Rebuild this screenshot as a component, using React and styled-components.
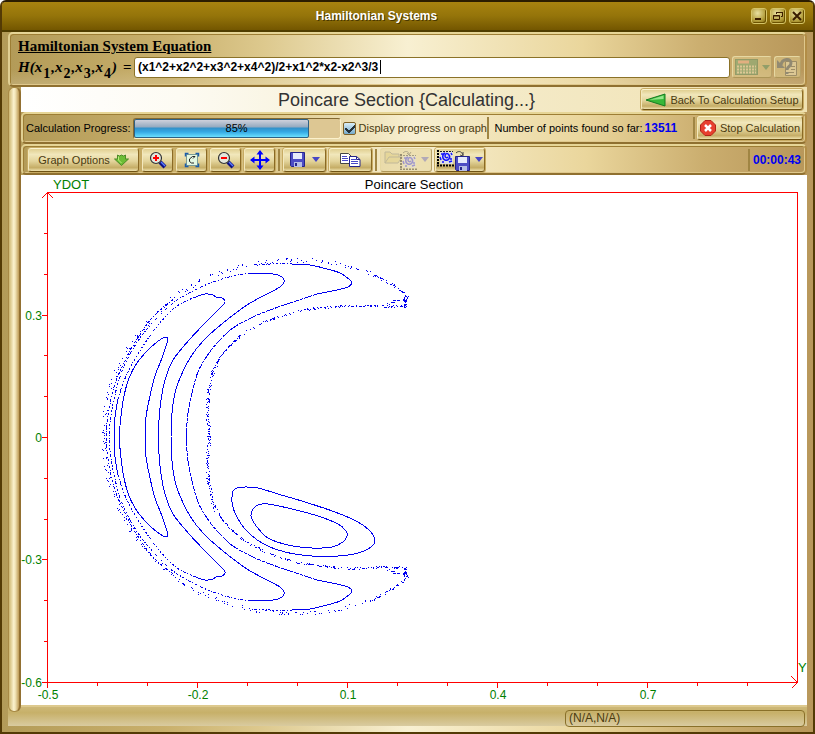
import React from "react";
import styled, { createGlobalStyle, css } from "styled-components";

const sheen =
  "linear-gradient(90deg, #b39b58 0%, #c9b06c 20%, #ddc98e 32%, #f8f0d2 50%, #ead69c 72%, #cbae6f 87%, #b8975a 100%)";

const Global = createGlobalStyle`
  * { box-sizing: border-box; }
  body { margin: 0; background: #fff; font-family: "Liberation Sans", Arial, sans-serif; font-size: 11px; color: #000; }
  button, input, output { font: inherit; }
`;

const Window = styled.div`
  display: flex;
  flex-direction: column;
  min-height: 100vh;
  border: 2px solid #533a05;
  border-top-color: #2b1d00;
  border-radius: 6px 6px 0 0;
  background: ${sheen};
  overflow: hidden;
`;

const TitleBar = styled.header`
  display: grid;
  grid-template-columns: 1fr auto 1fr;
  align-items: center;
  height: 30px;
  padding: 0 8px;
  background: linear-gradient(#a8830f, #94740a 50%, #735600);
  border-bottom: 2px solid #4f3d00;
`;

const Title = styled.h1`
  grid-column: 2;
  margin: 0;
  padding-right: 62px;
  font-size: 12px;
  line-height: 16px;
  color: #fff;
  text-shadow: 1px 1px 0 #4a3800;
`;

const WindowButtons = styled.div`
  display: flex;
  gap: 3px;
  justify-content: flex-end;
`;

const WindowButton = styled.button`
  display: grid;
  place-items: center;
  width: 16px;
  height: 16px;
  padding: 0;
  border: 1px solid #d5c466;
  border-radius: 3px;
  background: radial-gradient(circle at 40% 30%, #e9e0a0, #b39e3c 60%, #806608);
  box-shadow: inset -1px -1px 0 #6b5200;
`;

const panel = css`
  border: 2px solid;
  border-color: #e6d596 #b28d46 #8f7030 #e0cf92;
  border-radius: 5px;
  box-shadow: inset 1px 1px 0 #9d7e35, inset -1px -1px 0 #dfc88c;
`;

const Body = styled.main`
  flex: 1;
  display: flex;
  flex-direction: column;
  padding: 0 6px 6px;
`;

const EquationPanel = styled.section`
  ${panel}
  height: 55px;
  padding: 3px 4px 4px 8px;
  background: linear-gradient(rgba(255, 255, 255, 0) 70%, rgba(255, 255, 255, 0.15)), ${sheen};
`;

const EquationHeading = styled.h2`
  margin: 0;
  font: bold 15px/18px "Liberation Serif", "Times New Roman", serif;
  text-decoration: underline;
`;

const EquationRow = styled.div`
  display: flex;
  align-items: center;
  gap: 2px;
  height: 24px;
`;

const EquationLabel = styled.label`
  display: flex;
  gap: 1px;
  width: 114px;
  white-space: nowrap;
  font: italic bold 15px/20px "Liberation Serif", "Times New Roman", serif;
  sub { position: relative; top: 7px; font-style: normal; font-size: 14px; vertical-align: baseline; }
  b { font-style: normal; margin-left: 5px; }
`;

const Field = styled.div`
  position: relative;
  flex: 1;
  height: 21px;
`;

const EquationInput = styled.input`
  width: 100%;
  height: 21px;
  padding: 0 3px;
  border: 1px solid #8b7228;
  border-radius: 3px;
  background: #fff;
  font-size: 12px;
  font-weight: bold;
  outline: none;
`;

const Caret = styled.i`
  position: absolute;
  left: 246px;
  top: 3px;
  width: 1px;
  height: 14px;
  background: #000;
`;

const ToolButton = styled.button`
  display: flex;
  align-items: center;
  justify-content: center;
  gap: ${(p) => p.$gap || 4}px;
  flex: none;
  width: ${(p) => p.$w}px;
  height: ${(p) => p.$h || 24}px;
  padding: 0;
  border: 1px solid;
  border-color: #fbf3cf #8a6a25 #6f5314 #f3e8bd;
  border-radius: 3px;
  background: linear-gradient(#e0cf91, #f1e7bb 25%, #e3d49b 55%, #c5ad66 85%, #efe2ae);
  box-shadow: 0 0 0 1px #c7ab63;
  color: #4a3a10;
  white-space: nowrap;
  svg { flex: none; }
  &:disabled {
    border-color: #e6d8a2 #b7a066 #ad9658 #e6d8a2;
    background: rgba(225, 207, 145, 0.5);
    box-shadow: none;
  }
  &:disabled svg { opacity: 0.35; }
`;

const Workspace = styled.div`
  flex: 1;
  display: flex;
`;

const Splitter = styled.div`
  flex: none;
  position: relative;
  z-index: 1;
  width: 13px;
  margin-bottom: 14px;
  border: 1px solid #a88a45;
  border-right: 2px solid #927032;
  border-radius: 6px;
  background: linear-gradient(90deg, #cdb670, #f9efca 45%, #f4e8bd 60%, #bd9a55);
`;

const Content = styled.div`
  flex: 1;
  min-width: 0;
  display: flex;
  flex-direction: column;
`;

const SectionHeader = styled.div`
  display: flex;
  align-items: center;
  height: 25px;
  padding-right: 4px;
  background: linear-gradient(90deg, #fff 0%, #fdfbf3 20%, #f5edcf 50%, #f0e1b0 100%);
`;

const SectionTitle = styled.h2`
  flex: 1;
  margin: 0;
  padding-left: 151px;
  text-align: center;
  font-size: 18px;
  line-height: 22px;
  font-weight: normal;
  color: #333;
  white-space: nowrap;
`;

const Toolbar = styled.div`
  ${panel}
  display: flex;
  align-items: center;
  gap: ${(p) => p.$gap}px;
  height: ${(p) => p.$h}px;
  padding: 0 ${(p) => p.$pr}px 0 ${(p) => p.$pl}px;
  background: ${sheen};
  white-space: nowrap;
`;

const Progress = styled.div`
  position: relative;
  flex: none;
  width: 208px;
  height: 21px;
  border: 1px solid #a3833b;
  border-color: #846a32 #fbf1cc #fbf1cc #846a32;
  border-radius: 3px;
  background: #ddc793;
`;

const ProgressFill = styled.div`
  height: 100%;
  border: 1px solid #2e6184;
  border-radius: 2px;
  background: linear-gradient(#ced1dc, #96abc0 40%, #3291c9 48%, #35a9e4 70%, #6be0ff);
`;

const ProgressText = styled.span`
  position: absolute;
  inset: 0;
  text-align: center;
  line-height: 19px;
`;

const CheckLabel = styled.label`
  display: flex;
  flex: none;
  align-items: center;
  gap: 3px;
  width: 142px;
  color: #4a3a10;
`;

const CheckBox = styled.input`
  appearance: none;
  flex: none;
  width: 13px;
  height: 13px;
  margin: 0;
  border: 1px solid #806226;
  border-radius: 2px;
  background:
    linear-gradient(135deg, transparent 44%, #26333c 44% 62%, transparent 62%) 4px 1px / 8px 9px no-repeat,
    linear-gradient(45deg, transparent 36%, #26333c 36% 66%, transparent 66%) 1px 5px / 5px 5px no-repeat,
    linear-gradient(#d8edf7, #75aacb);
  &:not(:checked) { background: #fff; }
`;

const Separator = styled.span`
  flex: none;
  width: 2px;
  height: 22px;
  background: #a08543;
  margin-left: ${(p) => (p.$auto ? "auto" : "0")};
`;

const Blue = styled.output`
  font-size: 12px;
  font-weight: bold;
  color: #0000f0;
`;

const Count = styled.span`
  display: flex;
  align-items: center;
  gap: 2px;
  padding-left: 4px;
`;

const Graph = styled.figure`
  margin: 0;
  background: #fff;
  svg { display: block; width: 100%; height: auto; }
  text { font-family: "Liberation Sans", Arial, sans-serif; }
`;

const StatusBar = styled.footer`
  display: flex;
  align-items: center;
  height: 21px;
  margin-left: -13px;
  padding: 3px 2px 0 0;
  background: linear-gradient(#cdb878, #c7b069 30%, #d9cba0);
  border-top: 2px solid #ddc98e;
`;

const Coordinates = styled.output`
  width: 240px;
  height: 17px;
  margin-left: auto;
  padding-left: 3px;
  border: 1px solid #897029;
  border-radius: 4px;
  font-size: 12px;
  line-height: 15px;
  color: #4a3a10;
`;

/* ---------- icons ---------- */

const Magnifier = ({ plus }) => (
  <svg width="18" height="18" viewBox="0 0 18 18" aria-hidden="true">
    <path d="M11 11l5 5" stroke="#101080" strokeWidth="4" />
    <path d="M12 11l4 4" stroke="#5a7dff" strokeWidth="1.5" />
    <circle cx="7" cy="7" r="5.5" fill="#e3e6dc" stroke="#333" strokeWidth="1.2" />
    <path d={plus ? "M4 7h6M7 4v6" : "M4 7h6"} stroke="#f00" strokeWidth="2" />
  </svg>
);

const FitIcon = () => (
  <svg width="16" height="16" viewBox="0 0 16 16" fill="none" aria-hidden="true">
    <rect x="2.5" y="2.5" width="11" height="11" fill="#e4f7e2" stroke="#7b9c94" />
    <path d="M1.500 4.500v-3h3M11.500 1.500h3v3M14.500 11.500v3h-3M4.500 14.500h-3v-3" stroke="#1a5caa" strokeWidth="1.5" />
    <path d="M11 4.500H8.500L5.500 7v2.500l2 1.500H10M11 4.500L9 6.500" stroke="#222" />
  </svg>
);

const MoveIcon = () => (
  <svg width="20" height="20" viewBox="0 0 20 20" aria-hidden="true">
    <path d="M10 3v14M3 10h14" stroke="#00f" strokeWidth="2" />
    <path d="M10 0l3.500 4.500h-7zM10 20l3.500-4.500h-7zM0 10l4.500-3.500v7zM20 10l-4.500-3.500v7z" fill="#00f" />
  </svg>
);

const Floppy = () => (
  <>
    <path d="M.5.5h14v14h-13l-1-1z" fill="#4c4cc4" stroke="#24248c" />
    <path d="M3 1h9v6H3z" fill="#e6ebfb" />
    <path d="M4 10h8v5H4z" fill="#b6bde6" />
    <path d="M5 11h2v3H5z" fill="#24248c" />
  </>
);

const SaveIcon = () => (
  <svg width="15" height="15" viewBox="0 0 15 15" aria-hidden="true"><Floppy /></svg>
);

const DropArrow = ({ fill = "#4646c4" }) => (
  <svg width="8" height="5" viewBox="0 0 8 5" aria-hidden="true"><path d="M0 0h8L4 5z" fill={fill} /></svg>
);

const CopyIcon = () => (
  <svg width="21" height="14" viewBox="0 0 21 14" aria-hidden="true">
    <path d="M.5.5h8l2.500 2.500v7.500H.5z" fill="#fff" stroke="#444" />
    <path d="M2 3.500h5M2 5.500h6M2 7.500h6" stroke="#4848c8" />
    <path d="M9.500 3.500h7l3.500 3v7H9.500z" fill="#fff" stroke="#24248c" />
    <path d="M11 6.500h5M11 8.500h7M11 10.500h7" stroke="#4848c8" />
    <path d="M16.500 3.500v3h3.500" fill="none" stroke="#24248c" />
  </svg>
);

const MiniPlot = () => (
  <>
    <path d="M1 0v16M0 15.500h17" stroke="#000" strokeWidth="2" strokeDasharray="2 1" />
    <path d="M3 1h13v13H3z" fill="#dedfdf" />
    <path d="M3 1.500h13" stroke="#222" strokeDasharray="2 1" />
    <path d="M4 4h2M8 3c-3 1-3 6 0 7s6-2 4-5-4-1-4 1 2 2 3 1M14 3l1 2M3 7l1 3M5 12h2M12 12l3-1M14 8v2" fill="none" stroke="#1414ff" strokeWidth="1.5" />
  </>
);

const OpenPlotIcon = () => (
  <svg width="34" height="20" viewBox="0 0 34 20" aria-hidden="true">
    <path d="M1 13V2h5l2 2h7v3M1 13l4-6h13l-4 6z" fill="#dccb78" stroke="#777" />
    <path d="M19 3c3-3 6-1 6 1m-2-1l2 2 2-3" fill="none" stroke="#444" />
    <g transform="translate(16 4)"><MiniPlot /></g>
  </svg>
);

const SavePlotIcon = () => (
  <svg width="34" height="22" viewBox="0 0 34 22" aria-hidden="true">
    <g transform="translate(0 1)"><MiniPlot /></g>
    <path d="M19 4c3-3 6-1 7 2m-3 0l3 1V3" fill="none" stroke="#444" />
    <g transform="translate(18 7)"><Floppy /></g>
  </svg>
);

const GreenDown = () => (
  <svg width="15" height="12" viewBox="0 0 15 12" aria-hidden="true">
    <path d="M3.500 1l2 1 2-1 2 1 2-1v4h3l-7 6.500L.5 5h3z" fill="#6cbd35" stroke="#4d8a28" />
    <path d="M4.500 2.500v3.500l3 3" fill="none" stroke="#b9ec7c" />
  </svg>
);

const GreenBack = () => (
  <svg width="21" height="14" viewBox="0 0 21 14" aria-hidden="true">
    <path d="M1 7L20 1v12z" fill="#38b838" stroke="#157c20" />
    <path d="M4 7L18.500 2.500v3.500z" fill="#95e58a" />
  </svg>
);

const StopIcon = () => (
  <svg width="16" height="16" viewBox="0 0 16 16" aria-hidden="true">
    <path d="M5 .5h6L15.500 5v6L11 15.500H5L.5 11V5z" fill="#e8402f" stroke="#b22417" />
    <path d="M5 5l6 6M11 5l-6 6" stroke="#fff" strokeWidth="2.5" />
  </svg>
);

const KeypadIcon = () => (
  <svg width="23" height="16" viewBox="0 0 23 16" aria-hidden="true">
    <rect x=".5" y=".5" width="22" height="15" fill="#418b5c" stroke="#1e6040" />
    <path d="M3 3h11" stroke="#ff9d8a" strokeWidth="3" />
    <path d="M2 7.500h19M2 10.500h19M2 13.500h19" stroke="#f0e0c0" strokeWidth="2" strokeDasharray="2 1" />
  </svg>
);

const RecallIcon = () => (
  <svg width="21" height="18" viewBox="0 0 21 18" aria-hidden="true">
    <path d="M8.500 3.500h11v14h-11z" fill="#f5e9c6" stroke="#444" />
    <path d="M14 8.500h4M14 11.500h4M11 14.500h6" stroke="#444" />
    <path d="M4 7c1-7 10-7 10-2 0 4-4 3-4 7M10 14v2" fill="none" stroke="#233a68" strokeWidth="3" />
    <path d="M0 2v8h8z" fill="#233a68" />
  </svg>
);

/* ---------- plot ---------- */

const MID = 437;

const bananas = [
  [[119, 437], [121, 416], [124, 396], [129, 378], [137, 363], [147, 351], [157, 342], [163, 338], [166, 337], [168, 338], [167, 343], [162, 358], [155, 376], [150, 396], [146, 417], [145, 437]],
  [[193, 298], [205, 294], [213, 295], [216, 297], [222, 298], [225, 301], [223, 305], [210, 318], [190, 339], [173, 360], [165, 380], [161, 400], [159, 420], [158, 437]],
  [[171, 437], [172, 413], [175, 393], [180, 378], [190, 358], [203, 341], [223, 323], [247, 305], [267, 294], [280, 287], [284, 282], [282, 277], [273, 274], [250, 273]],
  [[317, 294], [337, 290], [348, 287], [352, 283], [350, 280], [340, 273], [327, 269], [310, 265], [292, 264]],
  [[114, 437], [115, 417], [118, 399]],
];

const dotted = [
  [[118, 399], [124, 381], [131, 366], [143, 346], [155, 329], [168, 314], [180, 304], [193, 298]],
  [[250, 273], [233, 276], [213, 282], [193, 291], [173, 303], [155, 320], [140, 338], [127, 360], [118, 383], [111, 415], [109, 437]],
  [[292, 264], [270, 264], [253, 265]],
  [[173, 300], [152, 318], [134, 344], [122, 367], [114, 387], [108, 415], [106, 437]],
];

const dashed = [
  [[186, 437], [188, 413], [192, 393], [198, 372], [207, 356], [218, 342], [233, 328], [253, 317], [270, 310], [290, 303], [317, 294]],
];

const outer = [[406, 297], [404, 293], [393, 285], [373, 274], [353, 268], [333, 263], [310, 260], [283, 260], [250, 264], [237, 267], [213, 275], [197, 282], [180, 292], [167, 303], [153, 315], [140, 331], [130, 344], [120, 361], [113, 377], [107, 398], [104, 417], [104, 437]];
const inner = [[405, 306], [377, 306], [350, 305], [323, 307], [300, 310], [270, 319], [250, 329], [237, 338], [223, 352], [216, 363], [212, 373], [208, 393], [207, 412], [209, 437]];

const loops = [
  [[232, 497], [233, 491], [237, 488], [245, 487], [258, 488], [278, 494], [305, 502], [335, 512], [358, 522], [370, 531], [375, 540], [371, 547], [358, 553], [338, 556], [312, 556], [285, 552], [262, 543], [245, 529], [235, 513], [232, 502]],
  [[251, 515], [253, 509], [258, 505], [268, 504], [292, 509], [318, 516], [338, 524], [346, 531], [347, 536], [343, 542], [332, 547], [312, 548], [288, 545], [268, 538], [257, 527], [252, 519]],
];

function smooth(points, closed) {
  const n = points.length;
  const at = (i) => (closed ? points[(i + n) % n] : points[Math.max(0, Math.min(n - 1, i))]);
  let d = `M${points[0]}`;
  for (let i = 0; i < (closed ? n : n - 1); i++) {
    const [p0, p1, p2, p3] = [at(i - 1), at(i), at(i + 1), at(i + 2)];
    d += `C${p1[0] + (p2[0] - p0[0]) / 6},${p1[1] + (p2[1] - p0[1]) / 6} ${p2[0] - (p3[0] - p1[0]) / 6},${p2[1] - (p3[1] - p1[1]) / 6} ${p2}`;
  }
  return d;
}

function scatter(points, density, spread, seed) {
  let s = seed;
  const rnd = () => (s = (s * 16807) % 2147483647) / 2147483647;
  let d = "";
  for (let i = 0; i < points.length - 1; i++) {
    const [[ax, ay], [bx, by]] = [points[i], points[i + 1]];
    const count = Math.round(Math.hypot(bx - ax, by - ay) * density);
    for (let k = 0; k < count; k++) {
      const t = rnd();
      const x = Math.round(ax + (bx - ax) * t + (rnd() - 0.5) * spread);
      const y = Math.round(ay + (by - ay) * t + (rnd() - 0.5) * spread);
      d += `M${x} ${y}h1v1h-1z`;
    }
  }
  return d;
}

const tipCloud = scatter([[388, 304], [393, 301], [399, 300], [406, 300], [407, 295], [405, 306], [405, 296], [405, 306]], 1, 2, 77);

const Half = ({ seed }) => (
  <>
    {bananas.map((c, i) => <path key={i} d={smooth(c)} />)}
    {dotted.map((c, i) => <path key={i} d={smooth(c)} strokeDasharray="2 2 1 2 3 1 1 2" />)}
    {dashed.map((c, i) => <path key={i} d={smooth(c)} strokeDasharray="9 1 5 1 3 1" />)}
    <g fill="#0000f0" stroke="none">
      <path d={scatter(outer.slice(0, 4), 0.9, 2, seed)} />
      <path d={scatter(outer.slice(3), 0.4, 4, seed + 9)} />
      <path d={scatter(inner.slice(0, 5), 0.9, 2, seed + 21)} />
      <path d={scatter(inner.slice(4, 8), 0.7, 2, seed + 30)} />
      <path d={scatter(inner.slice(7, 10), 1.4, 1, seed + 35)} />
      <path d={scatter(inner.slice(9), 1.2, 3, seed + 41)} />
      <path d={tipCloud} />
    </g>
  </>
);

const xTicks = [[47, "-0.5"], [197, "-0.2"], [347, "0.1"], [497, "0.4"], [647, "0.7"]];
const yTicks = [[315, "0.3"], [437, "0"], [559, "-0.3"], [682, "-0.6"]];
const xMinor = [97, 147, 247, 297, 397, 447, 547, 597, 697, 747];
const yMinor = [233, 274, 355, 396, 478, 519, 600, 641];

const Plot = () => (
  <svg viewBox="21 175 786 530" role="img" aria-label="Poincare Section">
    <g stroke="#f00" fill="none" shapeRendering="crispEdges">
      <path d="M47.500 192.500H797.500V682.500H47.500z" />
      <path d="M41.500 198.500l6-6 6 6M791.500 676.500l6 6-6 6" />
      {xTicks.map(([x]) => <path key={x} d={`M${x + 0.5} 683v5`} />)}
      {xMinor.map((x) => <path key={x} d={`M${x + 0.5} 683v3`} />)}
      {yTicks.map(([y]) => <path key={y} d={`M42 ${y + 0.5}h5`} />)}
      {yMinor.map((y) => <path key={y} d={`M44 ${y + 0.5}h3`} />)}
    </g>
    <g fill="#008000" fontSize="12">
      {xTicks.map(([x, t]) => <text key={t} x={x + 1} y="699" textAnchor="middle">{t}</text>)}
      {yTicks.map(([y, t]) => <text key={t} x="42" y={y + 5} textAnchor="end">{t}</text>)}
      <text x="53" y="189" fontSize="13">YDOT</text>
      <text x="798" y="672" fontSize="13">Y</text>
    </g>
    <text x="414" y="189" fontSize="13" textAnchor="middle">Poincare Section</text>
    <g fill="none" stroke="#0000f0" shapeRendering="crispEdges">
      <Half seed={421} />
      <g transform={`translate(0 ${MID * 2}) scale(1 -1)`}><Half seed={9331} /></g>
      {loops.map((c, i) => <path key={i} d={smooth(c, true)} />)}
    </g>
  </svg>
);

const EQUATION = "(x1^2+x2^2+x3^2+x4^2)/2+x1^2*x2-x2^3/3";

export default function App() {
  const progress = 85;
  return (
    <>
      <Global />
      <Window>
        <TitleBar>
          <Title>Hamiltonian Systems</Title>
          <WindowButtons>
            <WindowButton aria-label="Minimize"><svg width="12" height="12"><path d="M2 9h6" stroke="#3a1d00" strokeWidth="2" /></svg></WindowButton>
            <WindowButton aria-label="Restore"><svg width="12" height="12" fill="none" stroke="#3a1d00"><path d="M4.500 4V2.500h6v4H9M4 2.500h7" /><path d="M1.500 5.500h6v4h-6zM1 6h7" /></svg></WindowButton>
            <WindowButton aria-label="Close"><svg width="12" height="12"><path d="M2 2l8 8M10 2l-8 8" stroke="#3a1d00" strokeWidth="2" /></svg></WindowButton>
          </WindowButtons>
        </TitleBar>
        <Body>
          <EquationPanel>
            <EquationHeading>Hamiltonian System Equation</EquationHeading>
            <EquationRow>
              <EquationLabel htmlFor="equation">
                <span>H(x</span><sub>1</sub><span>,x</span><sub>2</sub><span>,x</span><sub>3</sub><span>,x</span><sub>4</sub><span>)</span><b>=</b>
              </EquationLabel>
              <Field>
                <EquationInput id="equation" defaultValue={EQUATION} />
                <Caret />
              </Field>
              <ToolButton $w={40} $h={22} disabled aria-label="Keypad"><KeypadIcon /><DropArrow fill="#20704a" /></ToolButton>
              <ToolButton $w={27} $h={22} disabled aria-label="Recall equation"><RecallIcon /></ToolButton>
            </EquationRow>
          </EquationPanel>
          <Workspace>
            <Splitter />
            <Content>
              <SectionHeader>
                <SectionTitle>Poincare Section {"{Calculating...}"}</SectionTitle>
                <ToolButton $w={162} $h={21}><GreenBack />Back To Calculation Setup</ToolButton>
              </SectionHeader>
              <Toolbar $h={32} $pl={3} $pr={2} $gap={2}>
                <span id="progress-label">Calculation Progress:</span>
                <Progress role="progressbar" aria-labelledby="progress-label" aria-valuenow={progress}>
                  <ProgressFill style={{ width: `${progress}%` }} />
                  <ProgressText>{progress}%</ProgressText>
                </Progress>
                <CheckLabel><CheckBox type="checkbox" defaultChecked />Display progress on graph</CheckLabel>
                <Separator />
                <Count>Number of points found so far: <Blue>13511</Blue></Count>
                <Separator $auto />
                <ToolButton $w={106} $gap={4}><StopIcon />Stop Calculation</ToolButton>
              </Toolbar>
              <Toolbar $h={31} $pl={5} $pr={4} $gap={3}>
                <ToolButton $w={111}>Graph Options<GreenDown /></ToolButton>
                <ToolButton $w={31} aria-label="Zoom in"><Magnifier plus /></ToolButton>
                <ToolButton $w={31} aria-label="Fit"><FitIcon /></ToolButton>
                <ToolButton $w={31} aria-label="Zoom out"><Magnifier /></ToolButton>
                <ToolButton $w={31} aria-label="Pan"><MoveIcon /></ToolButton>
                <Separator />
                <ToolButton $w={43} $gap={7} aria-label="Save"><SaveIcon /><DropArrow /></ToolButton>
                <ToolButton $w={43} aria-label="Copy"><CopyIcon /></ToolButton>
                <Separator />
                <ToolButton $w={52} $gap={3} disabled aria-label="Open plot"><OpenPlotIcon /><DropArrow /></ToolButton>
                <ToolButton $w={50} aria-label="Save plot"><SavePlotIcon /><DropArrow /></ToolButton>
                <Separator $auto />
                <Blue>00:00:43</Blue>
              </Toolbar>
              <Graph><Plot /></Graph>
              <StatusBar><Coordinates>(N/A,N/A)</Coordinates></StatusBar>
            </Content>
          </Workspace>
        </Body>
      </Window>
    </>
  );
}
